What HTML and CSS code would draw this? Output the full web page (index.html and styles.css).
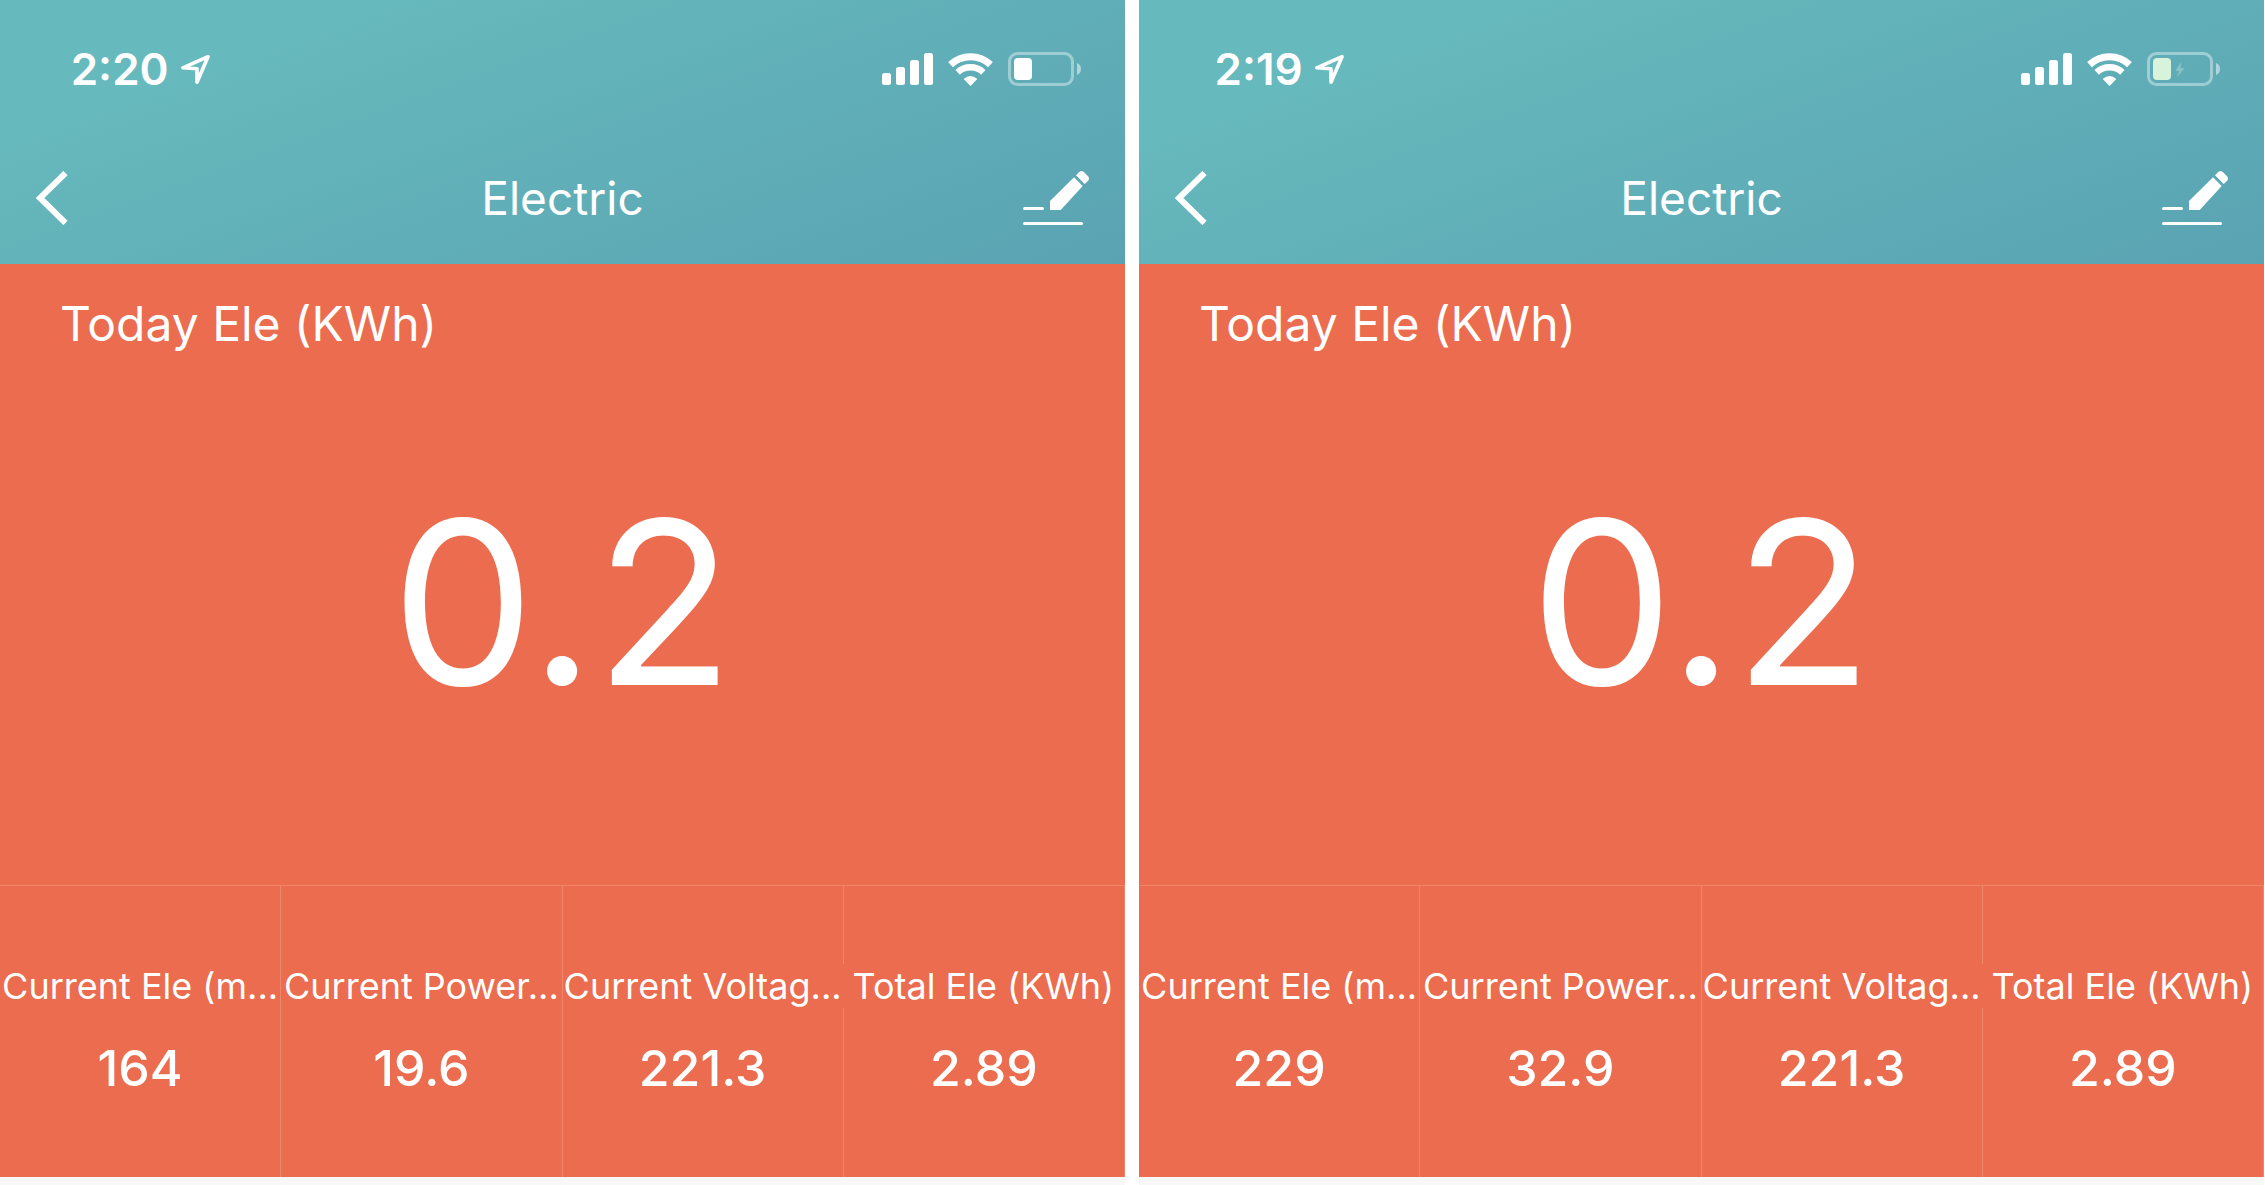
FILE: index.html
```html
<!DOCTYPE html>
<html lang="en">
<head>
  <meta charset="UTF-8" />
  <meta name="viewport" content="width=device-width, initial-scale=1.0"/>
  <title>Electric</title>
  <link rel="stylesheet" href="styles.css">
</head>
<body>
  <!-- shared icons -->
  <svg class="sprite" aria-hidden="true">
    <symbol id="location" viewBox="0 0 30 31">
      <path d="M27 2.7L1.9 13.8L16 14.7L16 28.3Z" fill="none" stroke="#fff" stroke-width="3.6" stroke-linejoin="round"/>
    </symbol>
    <symbol id="signal" viewBox="0 0 51 32">
      <rect x="0" y="20" width="9" height="12" rx="2.5" fill="#fff"/>
      <rect x="14" y="14" width="9" height="18" rx="2.5" fill="#fff"/>
      <rect x="28" y="7" width="9" height="25" rx="2.5" fill="#fff"/>
      <rect x="42" y="0" width="9" height="32" rx="2.5" fill="#fff"/>
    </symbol>
    <symbol id="wifi" viewBox="0 0 45 33">
      <path d="M2.5 11.6A29.3 29.3 0 0 1 42.5 11.6" fill="none" stroke="#fff" stroke-width="7"/>
      <path d="M9.7 19.3A18.7 18.7 0 0 1 35.3 19.3" fill="none" stroke="#fff" stroke-width="6.4"/>
      <path d="M22.5 33L15.7 26Q22.5 20 29.3 26Z" fill="#fff"/>
    </symbol>
    <symbol id="battery" viewBox="0 0 74 34">
      <rect x="1.5" y="1.5" width="63" height="31" rx="8" fill="none" stroke="#fff" stroke-opacity=".4" stroke-width="3"/>
      <path d="M69 11Q73 12.5 73 17Q73 21.5 69 23Z" fill="#fff" fill-opacity=".5"/>
    </symbol>
    <symbol id="back" viewBox="0 0 32 54">
      <path d="M29.5 2L4 27L29.5 52" fill="none" stroke="#fff" stroke-width="6"/>
    </symbol>
    <symbol id="edit" viewBox="0 0 66 54">
      <path d="M51 6.3L59.7 15L37.7 39H27V30Z" fill="#fff"/>
      <path d="M53 4.3L56 1.2Q58.5 -1 61 1.2L65 5.2Q67 7.5 65 10L61.7 13Z" fill="#fff"/>
      <rect x="0" y="36" width="21" height="3" rx="1.5" fill="#fff"/>
      <rect x="0" y="51" width="60" height="3" rx="1.5" fill="#fff"/>
    </symbol>
  </svg>

  <section class="phone">
    <header class="header">
      <div class="status-bar">
        <div class="clock">
          <span>2:20</span>
          <svg width="30" height="31"><use href="#location"/></svg>
        </div>
        <div class="status-icons">
          <svg width="51" height="32"><use href="#signal"/></svg>
          <svg width="45" height="33"><use href="#wifi"/></svg>
          <svg width="74" height="34">
            <use href="#battery"/>
            <rect x="6" y="6" width="18" height="22" rx="4" fill="#fff"/>
          </svg>
        </div>
      </div>
      <nav class="nav-bar">
        <button class="icon-button" aria-label="Back"><svg width="32" height="54"><use href="#back"/></svg></button>
        <h1>Electric</h1>
        <button class="icon-button" aria-label="Edit"><svg width="66" height="54"><use href="#edit"/></svg></button>
      </nav>
    </header>
    <main class="panel">
      <div class="today">
        <h2>Today Ele (KWh)</h2>
        <p>0.2</p>
      </div>
      <dl class="readings">
        <div><dt>Current Ele (m...</dt><dd>164</dd></div>
        <div><dt>Current Power...</dt><dd>19.6</dd></div>
        <div><dt>Current Voltag...</dt><dd>221.3</dd></div>
        <div><dt>Total Ele (KWh)</dt><dd>2.89</dd></div>
      </dl>
    </main>
  </section>

  <section class="phone">
    <header class="header">
      <div class="status-bar">
        <div class="clock">
          <span>2:19</span>
          <svg width="30" height="31"><use href="#location"/></svg>
        </div>
        <div class="status-icons">
          <svg width="51" height="32"><use href="#signal"/></svg>
          <svg width="45" height="33"><use href="#wifi"/></svg>
          <!-- charging -->
          <svg width="74" height="34">
            <use href="#battery"/>
            <rect x="6" y="6" width="18" height="22" rx="4" fill="#d7f3dc"/>
            <path d="M34.3 9.7L28.3 18.7L32 19L30.3 25L37.7 16.3L33.5 16Z" fill="#86c3c6"/>
          </svg>
        </div>
      </div>
      <nav class="nav-bar">
        <button class="icon-button" aria-label="Back"><svg width="32" height="54"><use href="#back"/></svg></button>
        <h1>Electric</h1>
        <button class="icon-button" aria-label="Edit"><svg width="66" height="54"><use href="#edit"/></svg></button>
      </nav>
    </header>
    <main class="panel">
      <div class="today">
        <h2>Today Ele (KWh)</h2>
        <p>0.2</p>
      </div>
      <dl class="readings">
        <div><dt>Current Ele (m...</dt><dd>229</dd></div>
        <div><dt>Current Power...</dt><dd>32.9</dd></div>
        <div><dt>Current Voltag...</dt><dd>221.3</dd></div>
        <div><dt>Total Ele (KWh)</dt><dd>2.89</dd></div>
      </dl>
    </main>
  </section>
</body>
</html>
```
FILE: styles.css
```css
* {
  box-sizing: border-box;
  margin: 0;
  padding: 0;
}
body {
  display: grid;
  grid-template-columns: 1fr 1fr;
  gap: 14px;
  padding-right: 1px;
  min-height: 100vh;
  background-color: #fff;
  color: #fff;
  font-family: Inter, "Liberation Sans", sans-serif;
}
.sprite {
  display: none;
}
.phone {
  background-color: #f8f8f8;
}
.header {
  background: linear-gradient(160deg, #66b9bc 20%, #5aa3b3 100%);
}
.status-bar {
  display: flex;
  align-items: center;
  justify-content: space-between;
  height: 132px;
  padding-top: 6px;
  padding-right: 43px;
}
.clock {
  display: flex;
  align-items: center;
  justify-content: center;
  gap: 12px;
  width: 26%;
  font-size: 44px;
  font-weight: 600;
}
.status-icons {
  display: flex;
  align-items: center;
  gap: 15px;
}
.nav-bar {
  display: grid;
  grid-template-columns: 1fr auto 1fr;
  align-items: center;
  height: 132px;
  padding: 0 36px;
}
.nav-bar h1 {
  font-size: 46px;
  font-weight: 400;
}
.icon-button {
  justify-self: start;
  border: none;
  background: none;
  cursor: pointer;
}
.icon-button:last-child {
  justify-self: end;
}
.icon-button svg {
  display: block;
}
.panel {
  background-color: #eb6c4e;
}
.today {
  padding: 30px 60px 163px;
}
.today h2 {
  font-size: 48px;
  font-weight: 400;
  line-height: 60px;
}
.today p {
  margin-top: 128px;
  font-size: 228px;
  line-height: 240px;
  text-align: center;
}
.readings {
  display: grid;
  grid-template-columns: repeat(4, 1fr);
  border-top: 1px solid #ef8569;
}
.readings div {
  padding: 78px 0 79px;
  border-right: 1px solid #ef8569;
  text-align: center;
  white-space: nowrap;
}
.readings dt {
  font-size: 36px;
  line-height: 44px;
}
/* the last label covers the divider beside it */
.readings div:last-child dt {
  margin-left: -1px;
  background-color: #eb6c4e;
}
.readings dd {
  margin-top: 30px;
  font-size: 50px;
  font-weight: 500;
  line-height: 60px;
}
```
